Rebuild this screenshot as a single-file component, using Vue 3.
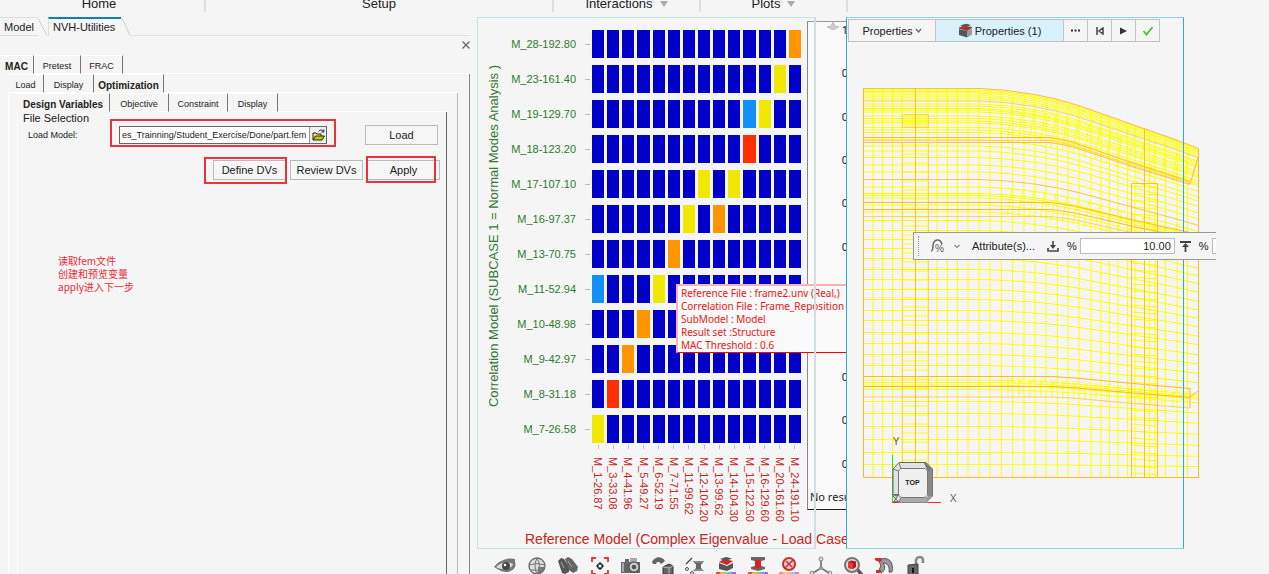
<template>
  <div class="app">
    <nav class="menu-bar">
      <a v-for="item in menus" :key="item.name" href="#" class="menu-item">
        {{ item.name }}
        <span v-if="item.arrow" class="menu-arrow"></span>
      </a>
    </nav>

    <div class="workspace">
      <aside class="side">
        <div class="doc-tabs">
          <button class="doc-tab" type="button">Model</button>
          <svg class="slant" width="10" height="19" viewBox="0 0 10 19">
            <path d="M0 1.5L9 18.5" />
          </svg>
          <button class="doc-tab active" type="button">NVH-Utilities</button>
          <svg class="slant" width="10" height="19" viewBox="0 0 10 19">
            <path d="M1 1L9 18.5" />
          </svg>
          <span class="doc-line"></span>
        </div>

        <button class="close-btn" type="button" aria-label="Close">
          <svg width="8" height="8" viewBox="0 0 8 8">
            <path d="M.5 .5L7.5 7.5M7.5 .5L.5 7.5" stroke="#666" stroke-width="1.3" />
          </svg>
        </button>

        <div class="tabs tabs-main">
          <button
            v-for="(t, i) in mainTabs"
            :key="t"
            type="button"
            class="tab"
            :class="{ active: i === 0 }"
          >{{ t }}</button>
          <span class="tabs-rest"></span>
        </div>
        <div class="pane pane-main">
          <div class="tabs tabs-mac">
            <button
              v-for="(t, i) in macTabs"
              :key="t"
              type="button"
              class="tab"
              :class="{ active: i === 2 }"
            >{{ t }}</button>
            <span class="tabs-rest"></span>
          </div>
          <div class="pane pane-mac">
            <div class="tabs tabs-opt">
              <button
                v-for="(t, i) in optTabs"
                :key="t"
                type="button"
                class="tab"
                :class="{ active: i === 0 }"
              >{{ t }}</button>
              <span class="tabs-rest"></span>
            </div>
            <div class="pane pane-opt">
              <h2 class="section-title">File Selection</h2>
              <div class="file-row">
                <label for="model-file">Load Model:</label>
                <div class="file-field marked">
                  <input id="model-file" v-model="modelFile" type="text" />
                  <button class="browse" type="button" aria-label="Browse">
                    <svg width="13" height="12" viewBox="0 0 13 12">
                      <path d="M1 11V4H4L5 5H9V7" fill="#f5f060" stroke="#222" />
                      <path d="M1 11L3.5 7H12.5L10 11Z" fill="#c8c800" stroke="#222" />
                      <path d="M6.5 2.5C8 .5 10 .5 11.5 2.5M11.8 .5V3H9.3" fill="none" stroke="#222" />
                    </svg>
                  </button>
                </div>
                <button class="push" type="button">Load</button>
              </div>
              <div class="action-row">
                <span class="marked mark-define"><button class="push" type="button">Define DVs</button></span>
                <button class="push" type="button">Review DVs</button>
                <span class="marked mark-apply"><button class="push" type="button">Apply</button></span>
              </div>
              <p class="notes">读取fem文件<br />创建和预览变量<br />apply进入下一步</p>
            </div>
          </div>
        </div>
      </aside>

      <section class="plots">
        <div class="results">
          <span class="results-cone">
            <svg width="14" height="9" viewBox="0 0 14 9">
              <path d="M7 0L9 4L13 5L7 8L1 5L5 4Z" fill="#ccc" stroke="#aaa" stroke-width=".6" />
            </svg>
            1
          </span>
          <span v-for="n in 10" :key="n">0</span>
          <p>No results</p>
        </div>

        <div class="chart">
          <div class="y-title"><span>Correlation Model (SUBCASE 1 = Normal Modes Analysis )</span></div>
          <div class="rows">
            <div v-for="row in rows" :key="row.label" class="row">
              <span class="row-label">{{ row.label }}</span>
              <i class="tick"></i>
              <div class="cells">
                <b v-for="c in 14" :key="c" :class="row.hot[c - 1]"></b>
              </div>
            </div>
          </div>
          <div class="x-labels">
            <span v-for="label in cols" :key="label">{{ label }}</span>
          </div>
          <div class="x-title">Reference Model (Complex Eigenvalue - Load Case</div>
        </div>

        <div class="tooltip">
          Reference File : frame2.unv (Real,)<br />
          Correlation File : Frame_Reposition<br />
          SubModel : Model<br />
          Result set :Structure<br />
          MAC Threshold : 0.6
        </div>
        <div class="chart-frame"></div>
      </section>

      <section class="view">
        <div class="guide-bar">
          <button class="guide-select" type="button">
            Properties
            <svg width="7" height="5" viewBox="0 0 7 5"><path d="M1 1L3.5 4L6 1" fill="none" stroke="#666" stroke-width="1.2" /></svg>
          </button>
          <button class="guide-current" type="button">
            <svg width="15" height="15" viewBox="0 0 15 15">
              <path d="M1 6L9 8V14.5L1 12Z" fill="#555" />
              <path d="M9 8L14 5.5V11.5L9 14.5Z" fill="#999" />
              <path d="M1 5L6 3L14 4.5L9 7.5Z" fill="#e02020" stroke="#333" stroke-width=".6" />
              <path d="M2 2.5L8 .8L13 2L8 4Z" fill="#555" />
            </svg>
            Properties (1)
          </button>
          <button class="guide-btn" type="button" aria-label="More">
            <svg width="9" height="3" viewBox="0 0 9 3" fill="#333"><path d="M0 .5H2V2.5H0ZM3.5 .5H5.5V2.5H3.5ZM7 .5H9V2.5H7Z" /></svg>
          </button>
          <button class="guide-btn" type="button" aria-label="Back">
            <svg width="8" height="8" viewBox="0 0 8 8" fill="none" stroke="#444" stroke-width="1.5"><path d="M1 0V8M7 1V7L3 4Z" /></svg>
          </button>
          <button class="guide-btn" type="button" aria-label="Play">
            <svg width="7" height="8" viewBox="0 0 7 8"><path d="M0 .5L7 4L0 7.5Z" fill="#333" /></svg>
          </button>
          <button class="guide-btn" type="button" aria-label="Accept">
            <svg width="12" height="10" viewBox="0 0 12 10"><path d="M1.5 5L4.5 8.5L10.5 1" fill="none" stroke="#4cc22e" stroke-width="1.8" /></svg>
          </button>
        </div>

        <svg class="mesh" width="338" height="392" viewBox="862 87 338 392">
          <path v-for="(p, i) in meshPaths" :key="i" :d="p.d" :stroke="p.color" :stroke-opacity="p.alpha" />
        </svg>
        <div class="view-frame"></div>

        <svg class="triad" width="72" height="74" viewBox="888 434 72 74">
          <path d="M892.5 455V502" stroke="#1fe81f" />
          <path d="M892 502.5H941" stroke="#f03030" />
          <path d="M899 462.5H926L932.5 469V496L926 502.5H899L893 496V469Z" fill="#e2e2e2" stroke="#666" />
          <path d="M928 470L932.5 469V496L928 497Z" fill="#888" />
          <path d="M901 497H927L928 502.5H899Z" fill="#aaa" />
          <path d="M924 463H926L932 469L927.5 471Z" fill="#777" />
          <path d="M927 497L932 496L926 502Z" fill="#999" />
          <path d="M900.5 468.5H925L927.5 471V495L925 497.5H901L898.5 495V471Z" fill="#efefef" stroke="#777" />
          <path d="M893 469L898.5 471M899 463L901 468.5M893 496L898.5 495M899 502L901 497.5" stroke="#777" />
          <text x="912.5" y="485" class="cube-text">TOP</text>
          <text x="893" y="445" class="axis-text">Y</text>
          <text x="950" y="502" class="axis-text">X</text>
          <text x="893" y="502" class="axis-text">Z</text>
        </svg>

        <div class="micro-bar">
          <i class="grip"></i>
          <svg width="16" height="16" viewBox="0 0 16 16">
            <path d="M1 13C3 13 3 10 3 7C4 1 10 0 12 6" fill="none" stroke="#666" stroke-width="1.5" />
            <text x="5" y="14" class="curve-text">%</text>
          </svg>
          <svg width="6" height="5" viewBox="0 0 6 5"><path d="M.5 1L3 3.5L5.5 1" fill="none" stroke="#888" stroke-width="1.2" /></svg>
          <button class="attr" type="button">Attribute(s)...</button>
          <svg width="12" height="11" viewBox="0 0 12 11">
            <path d="M6 0V6M1 7V10H11V7" fill="none" stroke="#444" stroke-width="1.6" />
            <path d="M3 4H9L6 8Z" fill="#444" />
          </svg>
          <label for="low-pct">%</label>
          <input id="low-pct" v-model="lowPct" type="text" />
          <svg width="11" height="11" viewBox="0 0 11 11">
            <path d="M0 1H11M5.5 4V11" fill="none" stroke="#444" stroke-width="1.8" />
            <path d="M2 6L5.5 2L9 6Z" fill="#444" />
          </svg>
          <label for="high-pct">%</label>
          <input id="high-pct" v-model="highPct" type="text" />
        </div>
      </section>

      <div class="tools">
        <button type="button" aria-label="View">
          <svg viewBox="0 0 24 20">
            <path d="M1 11C6 4 16 1 22 3V6C24 11 20 16 13 16C8 16 5 13 1 11Z" fill="#777" />
            <path d="M3 11C8 6 14 5 20 8C19 13 9 15 3 11Z" fill="#ddd" />
            <circle cx="13" cy="10" r="4" fill="#444" /><circle cx="12" cy="9" r="1.3" fill="#fff" />
          </svg>
        </button>
        <button type="button" aria-label="Globe">
          <svg viewBox="0 0 24 20">
            <circle cx="12" cy="10" r="8" fill="#ddd" stroke="#666" stroke-width="1.3" />
            <path d="M13 11H20A8 8 0 0 1 13 18Z" fill="#777" />
            <path d="M4 9Q12 6 20 9M12 2Q8 10 12 18M12 2Q17 10 12 18M5 14H19" fill="none" stroke="#777" />
          </svg>
        </button>
        <button type="button" aria-label="Find">
          <svg viewBox="0 0 24 20">
            <path d="M2 5L5 2L8 3L13 11V16L9 18L6 17Z" fill="#555" />
            <path d="M9 3L12 1L16 3L22 11L21 15L17 17L13 14Z" fill="#666" />
            <path d="M5 6L8 12M12 5L16 11" stroke="#aaa" />
          </svg>
        </button>
        <button type="button" aria-label="Fit">
          <svg viewBox="0 0 24 20" fill="none">
            <path d="M4 6V2H8M16 2H20V6M4 14V18H8M16 18H20V14" stroke="#e33" stroke-width="1.8" />
            <circle cx="12" cy="10" r="2.5" stroke="#222" stroke-width="1.2" />
            <path d="M12 6V9M12 11V14M8 10H11M13 10H16" stroke="#222" stroke-width="1.2" />
          </svg>
        </button>
        <button type="button" aria-label="Capture">
          <svg viewBox="0 0 24 20">
            <path d="M2 6H6V3H10V6H21V17H2Z" fill="#666" />
            <path d="M3 7H5V16H3ZM11 2H18V6H11Z" fill="#aaa" />
            <circle cx="15" cy="11" r="5" fill="#ccc" stroke="#444" /><circle cx="15" cy="11" r="2.3" fill="#555" />
          </svg>
        </button>
        <button type="button" aria-label="Transform">
          <svg viewBox="0 0 24 20">
            <path d="M1 6C4 0 11 0 14 5L10 8C8 5 6 5 5 8H2Z" fill="#666" />
            <path d="M12 11L18 8L22 10V18H12Z" fill="#666" stroke="#333" /><path d="M12 11L18 12V18M18 12L22 10" fill="none" stroke="#bbb" />
          </svg>
        </button>
        <button type="button" aria-label="Section">
          <svg viewBox="0 0 24 20">
            <path d="M3 8L9 2" stroke="#444" stroke-width="1.2" />
            <circle cx="4" cy="13" r="1.5" fill="none" stroke="#555" /><circle cx="9" cy="17" r="1.5" fill="none" stroke="#555" />
            <path d="M10 5H21L19 8H18V12L21 15H10L13 12V8H12Z" fill="#666" /><path d="M11 6H20M11 14H20" stroke="#aaa" />
          </svg>
        </button>
        <button type="button" aria-label="Color properties">
          <svg viewBox="0 0 24 20">
            <path d="M5 7L13 10L19 7V12L13 15L5 13Z" fill="#555" /><path d="M5 6L10 3L19 5L13 9Z" fill="#e02020" />
            <path d="M6 3L12 1L18 2.5L12 5Z" fill="#555" />
            <path d="M2 17H6" stroke="#f44" stroke-width="2" /><path d="M6 17H10" stroke="#fa4" stroke-width="2" />
            <path d="M10 17H14" stroke="#8d5" stroke-width="2" /><path d="M14 17H18" stroke="#5bf" stroke-width="2" /><path d="M18 17H22" stroke="#96f" stroke-width="2" />
          </svg>
        </button>
        <button type="button" aria-label="Color elements">
          <svg viewBox="0 0 24 20">
            <path d="M5 1H19V4L15 5V10L19 11V13L12 15L5 13V11L9 10V5L5 4Z" fill="#666" /><path d="M9 4H15V12H9Z" fill="#e02020" />
            <path d="M2 17H6" stroke="#f44" stroke-width="2" /><path d="M6 17H10" stroke="#fa4" stroke-width="2" />
            <path d="M10 17H14" stroke="#8d5" stroke-width="2" /><path d="M14 17H18" stroke="#5bf" stroke-width="2" /><path d="M18 17H22" stroke="#96f" stroke-width="2" />
          </svg>
        </button>
        <button type="button" aria-label="Color off">
          <svg viewBox="0 0 24 20">
            <circle cx="12" cy="8" r="6" fill="#e8c8c8" stroke="#c83030" stroke-width="2" />
            <path d="M8 12L16 4M9 5L15 11" stroke="#c83030" stroke-width="1.5" />
            <path d="M2 17H6" stroke="#f88" stroke-width="2" /><path d="M6 17H10" stroke="#fc8" stroke-width="2" />
            <path d="M10 17H14" stroke="#ad8" stroke-width="2" /><path d="M14 17H18" stroke="#8cf" stroke-width="2" /><path d="M18 17H22" stroke="#b8f" stroke-width="2" />
          </svg>
        </button>
        <button type="button" aria-label="Systems">
          <svg viewBox="0 0 24 20">
            <path d="M12 4V12L4 17M12 12L20 17" fill="none" stroke="#777" stroke-width="1.8" />
            <circle cx="12" cy="3" r="2" fill="#ddd" stroke="#888" /><circle cx="3" cy="17" r="1.8" fill="#ddd" stroke="#888" />
            <circle cx="21" cy="17" r="1.8" fill="#ddd" stroke="#888" /><circle cx="12" cy="12" r="2" fill="#999" />
          </svg>
        </button>
        <button type="button" aria-label="Inspect">
          <svg viewBox="0 0 24 20">
            <path d="M16 13L21 19" stroke="#555" stroke-width="3.5" />
            <circle cx="11" cy="9" r="7" fill="#ddd" stroke="#777" stroke-width="2" />
            <path d="M7 6L10 4.5L15 5.5V11L12 13L7 12Z" fill="#b41818" /><path d="M7 6L12 7V13L7 12Z" fill="#e83838" />
          </svg>
        </button>
        <button type="button" aria-label="Mask">
          <svg viewBox="0 0 24 20">
            <path d="M9 3C17 1 22 6 20 16H17C18 10 15 7 11 7C14 10 13 15 9 17L7 14C9 11 9 8 7 6Z" fill="#999" stroke="#555" />
            <path d="M3 2H9L10 5L7 6L3 4ZM4 14H9V17H4Z" fill="#d42a2a" />
          </svg>
        </button>
        <button type="button" aria-label="Unlock">
          <svg viewBox="0 0 24 20">
            <path d="M12 9V4C13 0 19 0 19 4V7" fill="none" stroke="#888" stroke-width="2.5" />
            <path d="M4 9L14 8V20H4Z" fill="#666" stroke="#444" /><path d="M8 12H10V17H8Z" fill="#111" />
          </svg>
        </button>
      </div>
    </div>
  </div>
</template>

<script setup>
import { ref } from 'vue'

const modelFile = ref('es_Trainning/Student_Exercise/Done/part.fem')
const lowPct = ref('10.00')
const highPct = ref('')

const menus = [
  { name: 'Home' },
  { name: 'Setup' },
  { name: 'Interactions', arrow: true },
  { name: 'Plots', arrow: true }
]
const mainTabs = ['MAC', 'Pretest', 'FRAC']
const macTabs = ['Load', 'Display', 'Optimization']
const optTabs = ['Design Variables', 'Objective', 'Constraint', 'Display']

// hot: column index -> colour class, everything else stays blue
const rows = [
  { label: 'M_28-192.80', hot: { 13: 'orange' } },
  { label: 'M_23-161.40', hot: { 12: 'yellow' } },
  { label: 'M_19-129.70', hot: { 10: 'sky', 11: 'yellow' } },
  { label: 'M_18-123.20', hot: { 10: 'red' } },
  { label: 'M_17-107.10', hot: { 7: 'yellow', 9: 'yellow' } },
  { label: 'M_16-97.37', hot: { 6: 'yellow', 8: 'orange' } },
  { label: 'M_13-70.75', hot: { 5: 'orange' } },
  { label: 'M_11-52.94', hot: { 0: 'sky', 4: 'yellow' } },
  { label: 'M_10-48.98', hot: { 3: 'orange' } },
  { label: 'M_9-42.97', hot: { 2: 'orange' } },
  { label: 'M_8-31.18', hot: { 1: 'red' } },
  { label: 'M_7-26.58', hot: { 0: 'yellow' } }
]
const cols = [
  'M_1-26.87', 'M_3-33.08', 'M_4-41.96', 'M_5-49.27', 'M_6-52.19', 'M_7-71.55', 'M_11-99.62',
  'M_12-104.20', 'M_13-99.62', 'M_14-104.30', 'M_15-122.50', 'M_16-129.60', 'M_20-161.60', 'M_24-191.10'
]

// panel mesh: the skin drops towards the right, the flanges start to drop later
const LEFT = 863.5
const RIGHT = 1198.5
const BOTTOM = 477.5
const skin = [[LEFT, 0], [980, 0], [1006, 0.03], [1035, 0.1], [1057, 0.18], [1078, 0.28], [1112, 0.48], [1145, 0.675], [1172, 0.83], [RIGHT, 1]]
const flange = [[LEFT, 0], [1050, 0], [1060, 0.04], [1073, 0.11], [1090, 0.24], [1130, 0.56], [1190, 1]]

function sample(curve, x) {
  for (let i = 1; i < curve.length; i++) {
    const [x0, s0] = curve[i - 1]
    const [x1, s1] = curve[i]
    if (x <= x1) return s0 + ((s1 - s0) * (x - x0)) / (x1 - x0)
  }
  return 1
}

const skinY = (y, x) => y + ((60 * (BOTTOM - y)) / 390) * sample(skin, x)
const polyline = (curve, y, drop) => 'M' + curve.map(([x, s]) => `${x} ${(y + drop * s).toFixed(1)}`).join('L')

const meshPaths = []
const add = (d, color = '#ffff00', alpha = 0.95) => meshPaths.push({ d, color, alpha })

const skinLines = [
  90, 91.5, 93, 95, 97, 99, 104, 106, 108.5, 110, 112, 116, 118.5, 121, 123, 127.5, 130, 132.5, 139.5,
  146, 151, 157.5, 165, 172, 187, 193.5, 195.5, 198, 205, 212, 220.5, 230.5, 239.5, 248.5, 258.5, 269.5, 279.5,
  289.5, 299.5, 310.5, 320.5, 332.5, 343.5, 354.5, 365.5, 380, 382.5, 385, 389.5, 401.5, 413.5, 426.5, 439.5, 452.5, 464.5
]
skinLines.forEach((y) => add(polyline(skin, y, (60 * (BOTTOM - y)) / 390)))

const columns = [
  873, 882.5, 892.5, 902, 928, 937, 947.5, 957.5, 968, 979, 990, 1001.5, 1012.5, 1024, 1035, 1046, 1057.5,
  1068, 1079, 1091, 1101, 1109.5, 1118, 1127.5, 1135, 1149.5, 1155, 1165.5, 1177, 1187.5
]
columns.forEach((x) => add(`M${x} ${skinY(88, x)}V${BOTTOM}`))

// stiffener webs between the flange lines
for (let x = 1012; x < 1195; x += 11) {
  add(`M${x} ${skinY(104, x)}L${x - 5} ${skinY(140, x - 5)}`)
  add(`M${x} ${skinY(186, x)}L${x - 5} ${skinY(214, x - 5)}`)
  add(`M${x} ${skinY(377, x)}L${x - 7} ${skinY(387, x - 7)}`)
  add(`M${x - 4} ${skinY(377, x - 4)}V${skinY(396, x - 4)}`)
}
for (let y = 145; y < 476; y += 9) add(`M902 ${y}H928`)
for (let y = 116; y < 127; y += 2) add(`M902 ${y}H928`)
for (let y = 186; y < 476; y += 7) add(`M1131 ${y}L1157 ${y + 2}`)

add(polyline(skin, 88.5, 60), '#ffb84d', 1)
add(polyline(skin, 101, 57), '#ffc83a', 0.8)
add(polyline(skin, 179.5, 46), '#ffbf30', 0.9)
add(polyline(flange, 137.5, 44), '#ffb030', 0.9)
add(polyline(flange, 140.5, 43), '#ffc030', 0.6)
add(polyline(flange, 142.5, 42), '#ffb030', 0.8)
add(polyline(flange, 202.5, 30), '#ffb030', 0.9)
add(polyline(flange, 209.5, 29), '#ffb030', 0.9)
add(polyline(flange, 216.5, 28), '#ffc850', 0.8)
add(polyline(flange, 376.5, 12), '#ffb820', 1)
add(polyline(flange, 386.5, 11), '#ffb820', 1)
add(polyline(flange, 397, 11), '#ffc060', 0.8)
add(`M${LEFT} 88.5V${BOTTOM}H${RIGHT}V148.5`, '#ffb82a', 1)
add('M1190 184L1198 158M1190 397L1198 391M1190 388V408', '#ffb030', 0.9)
add('M902.5 114.5H928.5V127.5H902.5ZM902.5 142V477M928.5 142V477', '#ffc46a', 0.8)
add('M915.5 88V477M1144.5 128V477', '#ffc800', 1)
add('M1131.5 477V183.5H1157.5V477', '#ffb82a', 0.9)
</script>

<style>
html,
body {
  background: #f5f5f5;
}
</style>

<style scoped>
.app {
  height: 100vh;
  display: flex;
  flex-direction: column;
  overflow: hidden;
  background: #f5f5f5;
  color: #222;
  font-family: "Liberation Sans", "Noto Sans CJK SC", sans-serif;
  font-size: 11px;
}

.app *,
.app *::before,
.app *::after {
  box-sizing: border-box;
}

button {
  padding: 0;
  border: 0;
  border-radius: 0;
  background: transparent;
  color: inherit;
  font: inherit;
  white-space: nowrap;
}

svg {
  display: block;
  flex: none;
}

.menu-bar {
  flex: none;
  height: 12px;
  display: grid;
  grid-template-columns: 206fr 348fr 147fr 147fr 421fr;
}

.menu-item {
  display: flex;
  justify-content: center;
  align-items: center;
  gap: 7px;
  border-right: 2px solid #ddd;
  padding-bottom: 5px;
  color: #222;
  font-size: 13px;
  line-height: 7px;
  text-decoration: none;
}

.menu-item:first-child {
  padding-right: 6px;
}

.menu-arrow {
  border: 4px solid transparent;
  border-top: 6px solid #aaa;
  border-bottom: 0;
}

.workspace {
  flex: 1;
  min-height: 0;
  display: grid;
  grid-template-columns: 477fr 370fr 422fr;
  grid-template-rows: minmax(0, 1fr) 25px;
}

/* left browser */
.side {
  grid-row: 1 / 3;
  min-width: 0;
  display: flex;
  flex-direction: column;
  padding: 5px 7px 0 0;
}

.doc-tabs {
  display: flex;
  height: 19px;
}

.doc-tab {
  padding: 0 0 0 4px;
  border-top: 1px solid #ddd;
  border-bottom: 1px solid #ddd;
  width: 38px;
  text-align: left;
}

.doc-tab.active {
  width: 73px;
  padding-bottom: 2px;
  border-top: 2px solid #0f7fb8;
  border-bottom: 0;
  border-left: 1px solid #ddd;
}

.slant path {
  fill: none;
  stroke: #ccc;
}

.doc-line {
  flex: 1;
  border-bottom: 1px solid #e2e2e2;
}

.close-btn {
  align-self: flex-end;
  width: 8px;
  height: 8px;
  margin: 5px 0 6px;
}

.tabs {
  flex: none;
  display: flex;
  height: 19px;
  font-size: 9px;
}

.tab {
  padding-top: 3px;
  border-top: 1px solid #fff;
  border-right: 1px solid #777;
  border-bottom: 1px solid #fff;
  color: #222;
}

.tab.active {
  border-bottom-color: transparent;
  font-size: 10px;
  font-weight: bold;
}

.tabs-rest {
  flex: 1;
  border-bottom: 1px solid #fff;
}

.tabs-main .tab {
  width: 42px;
}

.tabs-main .tab.active {
  width: 34px;
}

.tabs-main .tab:nth-child(2) {
  width: 47px;
}

.tabs-mac .tab {
  width: 36px;
}

.tabs-mac .tab:nth-child(2) {
  width: 50px;
}

.tabs-mac .tab.active {
  width: 70px;
}

.tabs-opt .tab {
  width: 59px;
}

.tabs-opt .tab.active {
  width: 93px;
}

.tabs-opt .tab:last-of-type {
  width: 50px;
}

.pane {
  flex: 1;
  display: flex;
  flex-direction: column;
  border-right: 1px solid #888;
}

.pane-main {
  padding: 0 11px 0 8px;
}

.pane-mac {
  padding: 0 10px 0 8px;
  border-left: 1px solid #fff;
  border-right: 1px solid #bbb;
}

.pane-opt {
  padding: 0 8px 0 5px;
  border-left: 1px solid #fff;
  border-right-color: #666;
}

.section-title {
  margin: 0;
  font-size: 11px;
  font-weight: normal;
  line-height: 13px;
}

.file-row {
  display: flex;
  align-items: center;
  height: 20px;
}

.file-row label {
  width: 96px;
  padding-left: 5px;
  font-size: 9px;
}

.file-field {
  width: 208px;
  height: 18px;
  display: flex;
  border: 1px solid #666;
  background: #fff;
}

.file-field input {
  flex: 1;
  min-width: 0;
  padding: 0 0 0 2px;
  border: 0;
  background: transparent;
  color: #222;
  font: 9px "Liberation Sans", sans-serif;
}

.browse {
  width: 17px;
  display: grid;
  place-items: center;
  border-left: 1px solid #999;
  background: #eee;
}

.push {
  width: 73px;
  height: 20px;
  border: 1px solid #bbb;
  background: #f6f6f6;
}

.file-row .push {
  margin-left: auto;
}

.marked {
  position: relative;
}

/* red review marks */
.marked::after {
  content: '';
  position: absolute;
  inset: -8px -10px -4px;
  border: 2px solid #e8343c;
  pointer-events: none;
}

.mark-define::after {
  inset: -3px -1px -4px -9px;
}

.mark-apply::after {
  inset: -4px 4px -3px -1px;
}

.action-row {
  display: flex;
  justify-content: flex-end;
  gap: 4px;
  margin: 15px -2px 0 0;
}

.notes {
  margin: 74px 0 0 35px;
  color: #ee2a38;
  font-family: "Noto Sans CJK SC", sans-serif;
  font-size: 10px;
  line-height: 13px;
}

/* MAC plot */
.plots {
  position: relative;
  min-width: 0;
  overflow: hidden;
  padding-top: 5px;
}

.chart {
  position: relative;
  width: 338px;
  height: 100%;
  display: grid;
  grid-template-columns: 33px minmax(0, 1fr);
  grid-template-rows: minmax(0, 1fr) 88px 18px;
  padding: 13px 14px 0 0;
}

.chart-frame {
  position: absolute;
  inset: 5px auto 0 0;
  width: 339px;
  border: 1px solid #c3e3ee;
  border-right: 2px solid #cfdfe3;
  pointer-events: none;
}

.y-title {
  display: flex;
  justify-content: center;
  align-items: center;
  color: #2f7a2f;
  font-size: 13px;
}

.y-title span {
  writing-mode: vertical-rl;
  transform: rotate(180deg);
  white-space: nowrap;
}

.rows {
  display: grid;
  grid-template-rows: repeat(12, minmax(0, 1fr));
  gap: 7px;
}

.row {
  display: grid;
  grid-template-columns: 66px 5px minmax(0, 1fr);
  column-gap: 9px;
  align-items: center;
}

.row-label {
  color: #2f7a2f;
  text-align: right;
}

.tick {
  height: 1px;
  background: #bbb;
}

.cells {
  height: 100%;
  display: grid;
  grid-template-columns: repeat(14, minmax(0, 1fr));
  column-gap: 3px;
  margin-left: -7px;
}

.cells b {
  background: #0000c8;
}

.cells .orange {
  background: #ff9600;
}

.cells .yellow {
  background: #f0e800;
}

.cells .sky {
  background: #1090f8;
}

.cells .red {
  background: #ff3000;
}

.x-labels {
  grid-column: 1 / 3;
  display: grid;
  grid-template-columns: repeat(14, minmax(0, 1fr));
  column-gap: 3px;
  padding: 2px 0 0 115px;
  color: #c4281e;
}

.x-labels span {
  display: flex;
  align-items: center;
  writing-mode: vertical-rl;
  white-space: nowrap;
}

.x-labels span::before {
  content: '';
  width: 1px;
  height: 4px;
  margin-bottom: 8px;
  background: #bbb;
}

.x-title {
  grid-column: 1 / 3;
  padding-left: 48px;
  color: #c4281e;
  font-size: 14px;
  line-height: 16px;
  white-space: nowrap;
}

.results {
  position: absolute;
  inset: 9px 0 39px 330px;
  display: flex;
  flex-direction: column;
  align-items: flex-end;
  border: 1px solid #222;
  border-top-color: #999;
  border-left: 1px solid #888;
  border-right: 0;
  background: #f9f9f9;
  font-family: "Noto Sans", sans-serif;
}

.results span {
  flex: 1;
  margin-right: -1px;
  line-height: 15px;
}

.results .results-cone {
  display: flex;
  gap: 2px;
}

.results p {
  width: 100%;
  margin: -10px 0 5px;
  padding-left: 2px;
  line-height: 15px;
  overflow: hidden;
  white-space: nowrap;
}

.tooltip {
  position: absolute;
  top: 272px;
  right: 0;
  width: 171px;
  padding: 1px 0 0 3px;
  border-top: 2px solid #ffb0b0;
  border-left: 2px solid #ffb0b0;
  border-bottom: 1px solid #f00;
  background: #f9f9f9;
  color: #f01414;
  font-family: "Noto Sans", sans-serif;
  font-size: 10px;
  line-height: 13px;
  white-space: nowrap;
}

/* model view */
.view {
  position: relative;
  min-width: 0;
  padding: 7px 0 0 1px;
}

.view-frame {
  position: absolute;
  inset: 5px auto 0 -1px;
  width: 338px;
  border: 1px solid #2aaede;
  border-top-color: #8fd2e8;
  border-bottom-color: #8fd2e8;
  pointer-events: none;
}

.guide-bar {
  display: flex;
  height: 23px;
}

.guide-bar button {
  display: flex;
  justify-content: center;
  align-items: center;
  border: 1px solid #c4c4c4;
  border-left: 0;
}

.guide-bar .guide-select {
  width: 88px;
  gap: 2px;
  border-left: 1px solid #c4c4c4;
}

.guide-current {
  width: 128px;
  gap: 2px;
  background: #d8f1fb;
}

.guide-btn {
  width: 24px;
}

.mesh {
  margin: 45px 0 0 14px;
  fill: none;
  overflow: visible;
}

.mesh path {
  fill: none;
  stroke-width: 1;
}

.triad {
  position: absolute;
  top: 422px;
  left: 41px;
  fill: none;
}

.cube-text {
  fill: #222;
  font-size: 7px;
  font-weight: bold;
  text-anchor: middle;
}

.axis-text {
  fill: #666;
  font: 11px "Noto Sans", sans-serif;
}

.micro-bar {
  position: absolute;
  top: 220px;
  left: 66px;
  width: 303px;
  height: 28px;
  display: flex;
  align-items: center;
  gap: 8px;
  padding-left: 4px;
  border: 1px solid #999;
  border-right: 0;
  background: #f5f5f5;
  overflow: hidden;
}

.grip {
  height: 20px;
  margin-right: 3px;
  border-left: 1px dotted #888;
}

.curve-text {
  fill: #555;
  font-size: 10px;
}

.attr {
  margin: 0 4px;
}

.micro-bar input {
  flex: none;
  width: 95px;
  height: 16px;
  margin: 0 -3px 0 -5px;
  padding: 0 3px;
  border: 1px solid #bbb;
  border-radius: 0;
  background: #fff;
  color: #222;
  font: 11px "Liberation Sans", sans-serif;
  text-align: right;
}

.tools {
  grid-column: 2 / 4;
  max-width: 451px;
  display: flex;
  justify-content: space-between;
  padding: 7px 0 0 16px;
  overflow: hidden;
}

.tools button {
  flex: none;
  width: 24px;
  height: 20px;
}

.tools svg {
  width: 24px;
  height: 20px;
}
</style>
